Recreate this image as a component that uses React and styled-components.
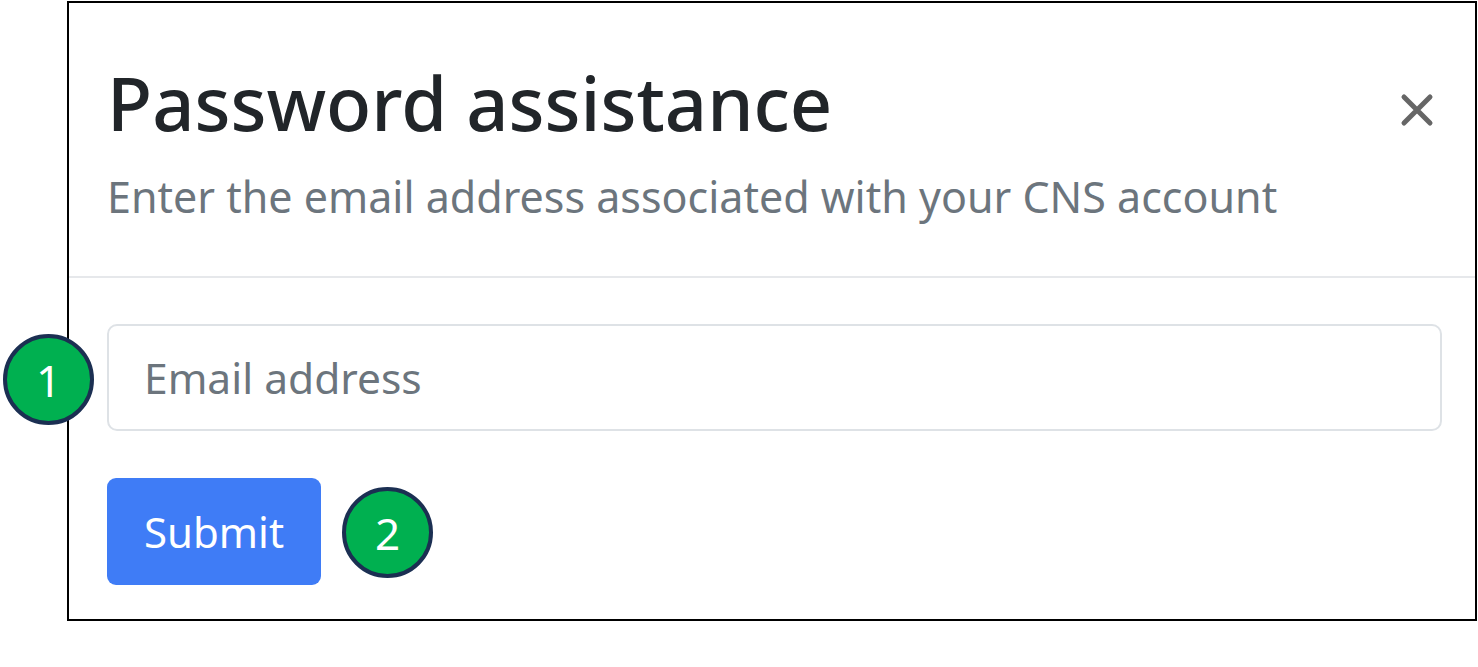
import React from 'react'
import styled, { createGlobalStyle } from 'styled-components'

const GlobalStyle = createGlobalStyle`
  html, body {
    margin: 0;
    background: #ffffff;
  }
  body {
    font-family: "Noto Sans", "Open Sans", sans-serif;
  }
`

const Page = styled.div`
  width: 1478px;
  height: 667px;
  padding: 1px 0 0 67px;
  box-sizing: border-box;
`

const Frame = styled.div`
  width: 1410px;
  height: 620px;
  border: 2px solid #000;
  box-sizing: border-box;
  background: #fff;
  position: relative;
`

const Header = styled.div`
  display: flex;
  justify-content: space-between;
  align-items: flex-start;
  padding: 50px 38px 0 38px;
  height: 275px;
  box-sizing: border-box;
  border-bottom: 2px solid #e6e8eb;
`

const Titles = styled.div`
  display: flex;
  flex-direction: column;
`

const Title = styled.h1`
  margin: 0;
  font-size: 74px;
  font-weight: 500;
  line-height: 100px;
  color: #212529;
`

const Subtitle = styled.p`
  margin: 14px 0 0;
  font-size: 43px;
  line-height: 60px;
  color: #6c757d;
`

const Close = styled.button`
  border: 0;
  background: none;
  padding: 0;
  margin-top: 37px;
  width: 40px;
  height: 40px;
  display: flex;
  align-items: center;
  justify-content: center;
  cursor: pointer;
`

const Body = styled.div`
  padding: 46px 33px 0 38px;
  display: flex;
  flex-direction: column;
  gap: 47px;
`

const Field = styled.div`
  position: relative;
`

const Input = styled.input`
  width: 100%;
  height: 107px;
  box-sizing: border-box;
  border: 2px solid #dee2e6;
  border-radius: 10px;
  padding: 0 35px;
  font-family: "Noto Sans", "Open Sans", sans-serif;
  font-size: 42.5px;
  color: #212529;
  outline: none;
  &::placeholder {
    color: #6c757d;
  }
`

const Row = styled.div`
  display: flex;
  align-items: center;
  gap: 21px;
`

const Button = styled.button`
  width: 214px;
  height: 107px;
  border: 0;
  border-radius: 9px;
  background: #3f7cf6;
  color: #fff;
  font-family: "Noto Sans", "Open Sans", sans-serif;
  font-size: 42px;
  font-weight: 400;
  padding: 0;
  cursor: pointer;
`

const Badge = styled.div`
  width: 91px;
  height: 91px;
  border-radius: 50%;
  background: #00b050;
  border: 4px solid #1b2f52;
  box-sizing: border-box;
  color: #fff;
  font-family: "Noto Sans", "Open Sans", sans-serif;
  font-size: 44px;
  display: flex;
  align-items: center;
  justify-content: center;
  flex-shrink: 0;
  margin-top: ${p => p.$offset || 0}px;
`

const FloatBadge = styled(Badge)`
  position: absolute;
  left: -104px;
  top: 10px;
`

const CloseIcon = () => (
  <svg width="34" height="34" viewBox="0 0 34 34">
    <path d="M4 4 L30 30 M30 4 L4 30" stroke="#666" strokeWidth="5" strokeLinecap="round" />
  </svg>
)

export default function App() {
  return (
    <>
      <GlobalStyle />
      <Page>
        <Frame>
          <Header>
            <Titles>
              <Title>Password assistance</Title>
              <Subtitle>Enter the email address associated with your CNS account</Subtitle>
            </Titles>
            <Close aria-label="Close"><CloseIcon /></Close>
          </Header>
          <Body>
            <Field>
              <Input placeholder="Email address" />
              <FloatBadge>1</FloatBadge>
            </Field>
            <Row>
              <Button>Submit</Button>
              <Badge $offset={2}>2</Badge>
            </Row>
          </Body>
        </Frame>
      </Page>
    </>
  )
}
